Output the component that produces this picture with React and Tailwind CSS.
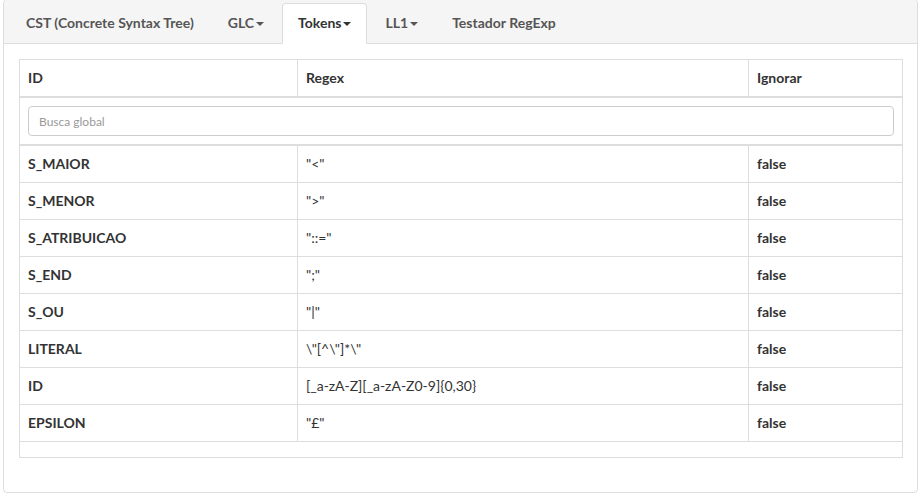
const tokens = [
  { id: "S_MAIOR", regex: '"<"', ignore: "false" },
  { id: "S_MENOR", regex: '">"', ignore: "false" },
  { id: "S_ATRIBUICAO", regex: '"::="', ignore: "false" },
  { id: "S_END", regex: '";"', ignore: "false" },
  { id: "S_OU", regex: '"|"', ignore: "false" },
  { id: "LITERAL", regex: '\\"[^\\"]*\\"', ignore: "false" },
  { id: "ID", regex: "[_a-zA-Z][_a-zA-Z0-9]{0,30}", ignore: "false" },
  { id: "EPSILON", regex: '"£"', ignore: "false" },
]

function Caret() {
  return (
    <span className="inline-block ml-[2px] align-middle w-0 h-0 border-t-[4px] border-t-current border-x-[4px] border-x-transparent" />
  )
}

function Tab({ label, active, dropdown }) {
  return (
    <div
      className={
        active
          ? "mr-[2px] -mb-px px-[15px] pt-[9px] pb-[9px] bg-white border border-[#dddddd] border-b-white rounded-t-[4px] text-[#333333]"
          : "mr-[2px] px-[15px] pt-[9px] pb-[9px] border border-transparent text-[#555555]"
      }
    >
      {label}
      {dropdown && <Caret />}
    </div>
  )
}

export default function App() {
  return (
    <div className="bg-white w-[922px] h-[496px] overflow-hidden text-[14px] leading-[20px] text-[#333333]" style={{ fontFamily: "Lato, 'Open Sans', sans-serif" }}>
      <div className="ml-[3px] -mt-px w-[915px] h-[494px] border border-[#dddddd] rounded-[4px] overflow-hidden flex flex-col">
        <div className="bg-[#f5f5f5] border-b border-[#dddddd] pt-[3px] pl-[6px] flex font-bold">
          <Tab label="CST (Concrete Syntax Tree)" />
          <Tab label="GLC" dropdown />
          <Tab label="Tokens" dropdown active />
          <Tab label="LL1" dropdown />
          <Tab label="Testador RegExp" />
        </div>
        <div className="p-[15px]">
          <table className="w-[884px] border border-[#dddddd] border-collapse">
            <thead>
              <tr className="text-left font-bold">
                <th className="w-[278px] px-[8px] py-[8px] border border-[#dddddd] border-b-2">ID</th>
                <th className="w-[451px] px-[8px] py-[8px] border border-[#dddddd] border-b-2">Regex</th>
                <th className="px-[8px] py-[8px] border border-[#dddddd] border-b-2">Ignorar</th>
              </tr>
              <tr>
                <th colSpan={3} className="px-[8px] py-[8px] border border-[#dddddd] border-b-2">
                  <input
                    placeholder="Busca global"
                    className="w-full h-[30px] px-[10px] border border-[#cccccc] rounded-[4px] text-[12px] font-normal text-[#555555] placeholder:text-[#999999] outline-none"
                  />
                </th>
              </tr>
            </thead>
            <tbody>
              {tokens.map((t) => (
                <tr key={t.id}>
                  <td className="px-[8px] py-[8px] border border-[#dddddd] font-bold">{t.id}</td>
                  <td className="px-[8px] py-[8px] border border-[#dddddd]">{t.regex}</td>
                  <td className="px-[8px] py-[8px] border border-[#dddddd] font-bold">{t.ignore}</td>
                </tr>
              ))}
            </tbody>
            <tfoot>
              <tr>
                <td colSpan={3} className="h-[16px] border border-[#dddddd]"></td>
              </tr>
            </tfoot>
          </table>
        </div>
      </div>
    </div>
  )
}
